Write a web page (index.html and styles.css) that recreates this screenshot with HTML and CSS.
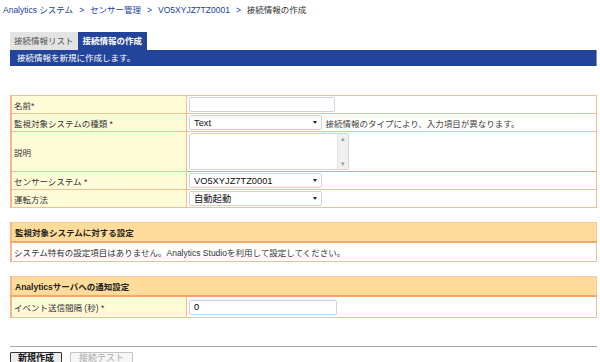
FILE: index.html
```html
<!DOCTYPE html>
<html lang="ja">
<head>
    <meta charset="UTF-8">
    <title>接続情報の作成</title>
    <link rel="stylesheet" href="styles.css">
</head>
<body>
    <div class="crumbs">
        <a href="#">Analytics システム</a><span class="sep">&gt;</span><a href="#">センサー管理</a><span class="sep">&gt;</span><a href="#" class="plain">VO5XYJZ7TZ0001</a><span class="sep">&gt;</span><span class="current">接続情報の作成</span>
    </div>
    <div class="page">
        <div class="tabs">
            <span class="tab">接続情報リスト</span>
            <span class="tab active">接続情報の作成</span>
        </div>
        <div class="bar">接続情報を新規に作成します。</div>

        <table class="form">
            <tr>
                <th>名前*</th>
                <td><input type="text" class="text"></td>
            </tr>
            <tr>
                <th>監視対象システムの種類 *</th>
                <td>
                    <span class="select"><select><option>Text</option></select></span>
                    <span class="note">接続情報のタイプにより、入力項目が異なります。</span>
                </td>
            </tr>
            <tr class="tall">
                <th>説明</th>
                <td>
                    <div class="area">
                        <textarea></textarea>
                        <div class="scroll"><span>&#9652;</span><span>&#9662;</span></div>
                    </div>
                </td>
            </tr>
            <tr>
                <th>センサーシステム *</th>
                <td><span class="select"><select><option>VO5XYJZ7TZ0001</option></select></span></td>
            </tr>
            <tr>
                <th>運転方法</th>
                <td><span class="select"><select><option>自動起動</option></select></span></td>
            </tr>
        </table>

        <table class="section">
            <tr><th colspan="2" class="head">監視対象システムに対する設定</th></tr>
            <tr><td colspan="2" class="msg">システム特有の設定項目はありません。Analytics Studioを利用して設定してください。</td></tr>
        </table>

        <table class="section">
            <tr><th colspan="2" class="head">Analyticsサーバへの通知設定</th></tr>
            <tr>
                <th class="label">イベント送信間隔 (秒) *</th>
                <td><input type="text" class="text wide" value="0"></td>
            </tr>
        </table>

        <div class="actions">
            <button class="btn">新規作成</button>
            <button class="btn" disabled>接続テスト</button>
        </div>
    </div>
</body>
</html>
```

FILE: styles.css
```css
body {
    margin: 0;
    font-family: "Liberation Sans", "Noto Sans CJK JP", sans-serif;
    font-size: 8.5px;
    color: #333;
    background: #fff;
}
.crumbs {
    height: 32px;
    box-sizing: border-box;
    padding: 4px 0 0 3px;
    line-height: 12px;
}
.crumbs a {
    color: #2140a0;
    text-decoration: none;
}
.crumbs .sep {
    color: #2140a0;
    margin: 0 6px;
}
.crumbs .current {
    color: #333;
}
.page {
    padding: 0 3px 0 10px;
}
.tabs {
    display: flex;
    height: 18px;
}
.tab {
    line-height: 18px;
    padding: 0 4px;
    background: #e3e3e3;
    color: #555;
}
.tab.active {
    background: #22449a;
    color: #fff;
    font-weight: bold;
    padding: 0 5px;
}
.bar {
    height: 16px;
    line-height: 16px;
    padding-left: 7px;
    background: #22449a;
    color: #fff;
    border-right: 1px solid #7c8fc4;
}
table {
    width: 100%;
    border-collapse: collapse;
}
.form {
    margin-top: 29px;
    border: 1px solid #fbbc94;
    border-left: 2px solid #fbb48a;
}
.form th, .section .label {
    width: 170px;
    background: #fffcd8;
    text-align: left;
    font-weight: normal;
    padding: 0 2px;
    border: 1px solid #fbbc94;
    color: #333;
}
.form td, .section td {
    padding: 0 2px;
    height: 17px;
    border: 1px solid #fbbc94;
}
.form .tall td {
    height: 39px;
    border-bottom: 1px solid #f4a06c;
}
.text {
    width: 146px;
    height: 15px;
    box-sizing: border-box;
    border: 1px solid #cdd5dc;
    border-radius: 2px;
    padding: 0 4px;
    font-family: "Liberation Sans", "Noto Sans CJK JP", sans-serif;
    font-size: 9.3px;
    vertical-align: middle;
}
.text.wide {
    width: 148px;
}
.select {
    position: relative;
    display: inline-block;
    vertical-align: middle;
}
.select select {
    appearance: none;
    width: 133px;
    height: 15px;
    box-sizing: border-box;
    border: 1px solid #cdd5dc;
    border-radius: 2px;
    background: #fff;
    padding: 0 4px;
    font-family: "Liberation Sans", "Noto Sans CJK JP", sans-serif;
    font-size: 9.3px;
    color: #111;
}
.select::after {
    content: "";
    position: absolute;
    right: 5px;
    top: 6px;
    border-left: 2.5px solid transparent;
    border-right: 2.5px solid transparent;
    border-top: 3px solid #222;
}
.note {
    color: #444;
    margin-left: 1px;
    vertical-align: middle;
}
.area {
    display: flex;
    width: 160px;
    height: 37px;
    box-sizing: border-box;
    border: 1px solid #cdd5dc;
    border-radius: 2px;
}
.area textarea {
    flex: 1;
    border: none;
    resize: none;
    outline: none;
    padding: 0;
}
.scroll {
    width: 10px;
    background: #f0f0f0;
    border-left: 1px solid #e2e2e2;
    display: flex;
    flex-direction: column;
    justify-content: space-between;
    align-items: center;
    color: #999;
    font-size: 7px;
    line-height: 10px;
}
.section {
    margin-top: 14px;
    border: 1px solid #fbc7a4;
    border-left: 2px solid #fbb48a;
}
.section .head {
    height: 18px;
    padding: 0 3px;
    background: #ffdc99;
    text-align: left;
    font-weight: bold;
    color: #222;
    border-bottom: 2px solid #f8a46a;
}
.section .msg {
    height: 18px;
    color: #333;
}
.section + .section {
    margin-top: 14px;
}
.section .label + td {
    height: 20px;
}
.actions {
    margin-top: 28px;
    border-top: 1px solid #aaa;
    padding-top: 5px;
    display: flex;
    gap: 8px;
}
.btn {
    height: 12px;
    padding: 0 7px;
    font-family: "Liberation Sans", "Noto Sans CJK JP", sans-serif;
    font-size: 9px;
    font-weight: bold;
    line-height: 10px;
    color: #111;
    background: #ededed;
    border: 1px solid #333;
    border-radius: 1px;
}
.btn:disabled {
    font-weight: normal;
    color: #aaa;
    border-color: #c4c4c4;
    background: #f6f6f6;
    padding: 0 8px;
}
```
